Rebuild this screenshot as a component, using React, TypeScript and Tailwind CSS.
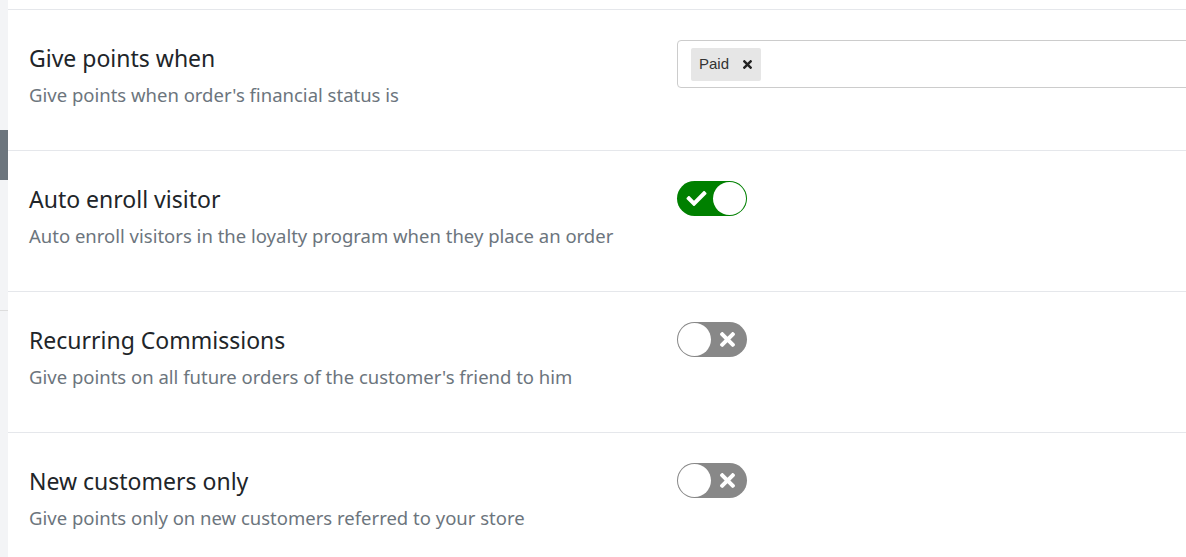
type Row = {
  title: string;
  desc: string;
  kind: "select" | "on" | "off";
};

const rows: Row[] = [
  { title: "Give points when", desc: "Give points when order's financial status is", kind: "select" },
  { title: "Auto enroll visitor", desc: "Auto enroll visitors in the loyalty program when they place an order", kind: "on" },
  { title: "Recurring Commissions", desc: "Give points on all future orders of the customer's friend to him", kind: "off" },
  { title: "New customers only", desc: "Give points only on new customers referred to your store", kind: "off" },
];

function CheckIcon({ className }: { className?: string }) {
  return (
    <svg viewBox="0 64 512 384" className={className} fill="currentColor">
      <path d="M173.898 439.404l-166.4-166.4c-9.997-9.997-9.997-26.206 0-36.204l36.203-36.204c9.997-9.998 26.207-9.998 36.204 0L192 312.69 432.095 72.596c9.997-9.997 26.207-9.997 36.204 0l36.203 36.204c9.997 9.997 9.997 26.206 0 36.204l-294.4 294.401c-9.998 9.997-26.207 9.997-36.204-.001z" />
    </svg>
  );
}

function TimesIcon({ className }: { className?: string }) {
  return (
    <svg viewBox="0 80 352 352" className={className} fill="currentColor">
      <path d="M242.72 256l100.07-100.07c12.28-12.28 12.28-32.19 0-44.48l-22.24-22.24c-12.28-12.28-32.19-12.28-44.48 0L176 189.28 75.93 89.21c-12.28-12.28-32.19-12.28-44.48 0L9.21 111.45c-12.28 12.28-12.28 32.19 0 44.48L109.28 256 9.21 356.07c-12.28 12.28-12.28 32.19 0 44.48l22.24 22.24c12.28 12.28 32.2 12.28 44.48 0L176 322.72l100.07 100.07c12.28 12.28 32.2 12.28 44.48 0l22.24-22.24c12.28-12.28 12.28-32.19 0-44.48L242.72 256z" />
    </svg>
  );
}

function Toggle({ on }: { on: boolean }) {
  return (
    <div
      className={`relative h-[35px] w-[70px] rounded-full ${on ? "bg-[#008000]" : "bg-[#888888]"}`}
    >
      <div
        className={`absolute top-[1px] h-[33px] w-[33px] rounded-full bg-white ${on ? "right-[1px]" : "left-[1px]"}`}
      />
      {on ? (
        <CheckIcon className="absolute left-[9px] top-[10px] h-[15px] w-[21px] text-white" />
      ) : (
        <TimesIcon className="absolute right-[12px] top-[10px] h-[15px] w-[15px] text-white" />
      )}
    </div>
  );
}

function TagSelect() {
  return (
    <div className="flex h-[48px] w-[560px] items-center rounded-[4px] border border-[#cccccc] bg-white pl-[13px]">
      <span className="flex h-[33px] items-center gap-[14px] rounded-[2px] bg-[#e6e6e6] pl-[8px] pr-[9px] font-['Liberation_Sans',sans-serif] text-[15px] text-[#333]">
        Paid
        <TimesIcon className="h-[9px] w-[9px] text-[#222]" />
      </span>
    </div>
  );
}

export default function App() {
  return (
    <div className="flex h-[557px] w-[1186px] overflow-hidden bg-white font-['Noto_Sans',sans-serif]">
      {/* Sidebar edge */}
      <div className="flex w-[8px] shrink-0 flex-col bg-[#f3f4f6]">
        <div className="h-[130px]" />
        <div className="h-[50px] bg-[#6c757d]" />
        <div className="h-[130px]" />
        <div className="h-px bg-[#dddddd]" />
      </div>

      <div className="flex min-w-0 flex-1 flex-col">
        <div className="h-[9px] shrink-0" />
        {rows.map((row) => (
          <div
            key={row.title}
            className="flex h-[141px] shrink-0 border-t border-[#e5e7eb] pl-[21px] pt-[30px]"
          >
            <div className="w-[648px] shrink-0">
              <div className="text-[23px] leading-[36px] text-[#212529]">{row.title}</div>
              <div className="mt-[6px] text-[18.5px] leading-[26px] text-[#6c757d]">{row.desc}</div>
            </div>
            <div>
              {row.kind === "select" ? <TagSelect /> : <Toggle on={row.kind === "on"} />}
            </div>
          </div>
        ))}
      </div>
    </div>
  );
}
